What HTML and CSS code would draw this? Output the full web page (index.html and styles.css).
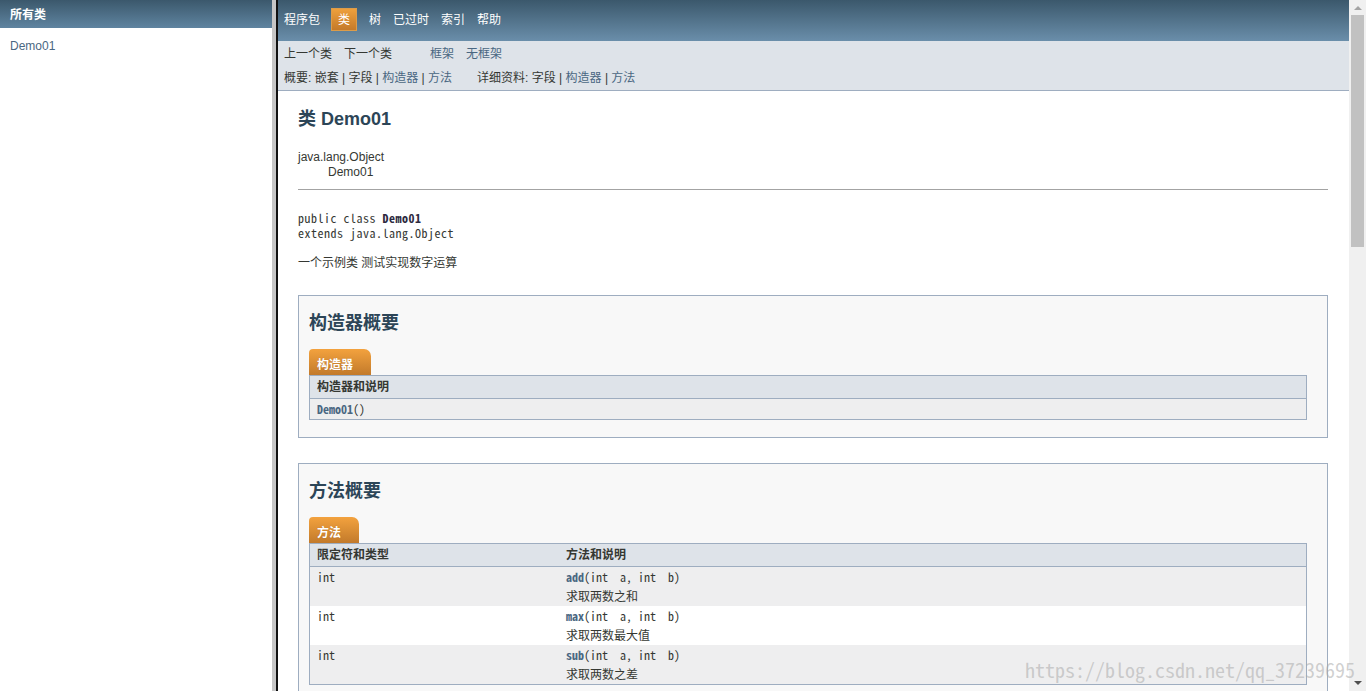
FILE: index.html
```html
<!DOCTYPE html>
<html lang="zh-CN">
<head>
<meta charset="utf-8">
<title>Demo01</title>
<link rel="stylesheet" href="styles.css">
</head>
<body>
<div class="page">
  <aside class="left-frame">
    <h1 class="bar">所有类</h1>
    <ul class="class-list">
      <li><a href="#">Demo01</a></li>
    </ul>
  </aside>
  <div class="divider"></div>
  <div class="right-frame">
    <div class="doc">
      <nav class="top-nav">
        <ul>
          <li>程序包</li>
          <li class="current">类</li>
          <li>树</li>
          <li>已过时</li>
          <li>索引</li>
          <li>帮助</li>
        </ul>
      </nav>
      <div class="sub-nav">
        <div class="row">
          <ul class="nav-list">
            <li>上一个类</li>
            <li>下一个类</li>
          </ul>
          <ul class="nav-list frames">
            <li><a href="#">框架</a></li>
            <li><a href="#">无框架</a></li>
          </ul>
        </div>
        <div class="row row2">
          <span>概要:&nbsp;嵌套&nbsp;|&nbsp;字段&nbsp;|&nbsp;<a href="#">构造器</a>&nbsp;|&nbsp;<a href="#">方法</a></span>
          <span>详细资料:&nbsp;字段&nbsp;|&nbsp;<a href="#">构造器</a>&nbsp;|&nbsp;<a href="#">方法</a></span>
        </div>
      </div>
      <div class="content">
        <h2 class="title">类 Demo01</h2>
        <div class="inheritance">
          <div>java.lang.Object</div>
          <div class="child">Demo01</div>
        </div>
        <hr class="rule">
        <pre class="signature">public class <b class="type-name">Demo01</b>
extends java.lang.Object</pre>
        <div class="desc">一个示例类 测试实现数字运算</div>

        <section class="summary">
          <h3>构造器概要</h3>
          <div class="tab"><span>构造器</span></div>
          <table class="member-table">
            <thead>
              <tr><th>构造器和说明</th></tr>
            </thead>
            <tbody>
              <tr class="alt"><td><code><a class="member" href="#">Demo01</a>()</code></td></tr>
            </tbody>
          </table>
        </section>

        <section class="summary">
          <h3>方法概要</h3>
          <div class="tab"><span>方法</span></div>
          <table class="member-table">
            <thead>
              <tr><th class="col-first">限定符和类型</th><th>方法和说明</th></tr>
            </thead>
            <tbody>
              <tr class="alt">
                <td class="col-first"><code>int</code></td>
                <td><code><a class="member" href="#">add</a>(int&nbsp;&nbsp;a, int&nbsp;&nbsp;b)</code><div class="block">求取两数之和</div></td>
              </tr>
              <tr>
                <td class="col-first"><code>int</code></td>
                <td><code><a class="member" href="#">max</a>(int&nbsp;&nbsp;a, int&nbsp;&nbsp;b)</code><div class="block">求取两数最大值</div></td>
              </tr>
              <tr class="alt">
                <td class="col-first"><code>int</code></td>
                <td><code><a class="member" href="#">sub</a>(int&nbsp;&nbsp;a, int&nbsp;&nbsp;b)</code><div class="block">求取两数之差</div></td>
              </tr>
            </tbody>
          </table>
        </section>
      </div>
    </div>
    <div class="scrollbar">
      <div class="sb-btn"><span class="arrow-up"></span></div>
      <div class="sb-thumb"></div>
      <div class="sb-track"></div>
      <div class="sb-btn sb-btn-down"><span class="arrow-down"></span></div>
    </div>
  </div>
  <div class="watermark">https://blog.csdn.net/qq_37239695</div>
</div>
</body>
</html>
```
FILE: styles.css
```css
html, body {
  margin: 0;
  height: 100%;
}
body {
  font-family: "Liberation Sans", "Noto Sans CJK SC", sans-serif;
  font-size: 12px;
  color: #353833;
  background: #fff;
  overflow: hidden;
}
a {
  color: #4a6782;
  text-decoration: none;
}
ul {
  list-style: none;
  margin: 0;
  padding: 0;
}
code, pre {
  font-family: "Noto Sans Mono CJK SC", "Liberation Mono", monospace;
}

.page {
  display: flex;
  height: 691px;
  position: relative;
}

/* left frame */
.left-frame {
  width: 272px;
  flex: none;
  background: #fff;
}
.bar {
  margin: 0;
  height: 28px;
  box-sizing: border-box;
  padding: 3px 0 0 10px;
  line-height: 25px;
  background: linear-gradient(#3b586c, #5f84a0);
  color: #fff;
  font-size: 12px;
  font-weight: bold;
}
.class-list {
  padding: 10px 0 0 10px;
  line-height: 16px;
}

.divider {
  width: 4px;
  flex: none;
  background: #c6c6c6;
  border-right: 2px solid #111;
}

/* right frame */
.right-frame {
  flex: 1;
  display: flex;
  min-width: 0;
}
.doc {
  flex: 1;
  min-width: 0;
  overflow: hidden;
}

.top-nav {
  height: 41px;
  box-sizing: border-box;
  padding: 8px 0 0 6px;
  background: linear-gradient(#3b586c, #6a8eaa);
}
.top-nav ul {
  display: flex;
  gap: 12px;
}
.top-nav li {
  color: #fff;
  height: 21px;
  padding-top: 1px;
  box-sizing: content-box;
  line-height: 21px;
  border-top: 1px solid transparent;
  border-bottom: 1px solid transparent;
}
.top-nav li.current {
  margin-left: -1px;
  padding: 1px 6px 0;
  height: 20px;
  border: 1px solid #dc9c4a;
  background: linear-gradient(#eea03c, #c47a2a);
}

.sub-nav {
  height: 49px;
  background: #dee3e9;
  border-bottom: 1px solid #9eadc0;
}
.sub-nav .row {
  display: flex;
  line-height: 16px;
  padding-top: 5px;
}
.nav-list {
  display: flex;
  margin-right: 25px;
}
.nav-list li {
  padding: 0 6px;
}
.nav-list.frames {
  margin-left: 1px;
}
.sub-nav .row2 {
  padding: 8px 0 0 6px;
  gap: 25px;
}

/* content */
.content {
  padding: 0 21px 0 20px;
}
.title {
  margin: 17px 0 0;
  font-size: 18px;
  line-height: 22px;
  font-weight: bold;
  color: #2c4557;
}
.inheritance {
  margin-top: 20px;
  line-height: 15px;
}
.inheritance .child {
  padding-left: 30px;
}
.rule {
  margin: 9px 0 0;
  border: 0;
  border-top: 1px solid #a3a3a3;
  height: 0;
}
.signature {
  margin: 20px 0 0;
  font-size: 12px;
  line-height: 15px;
  letter-spacing: 0.5px;
}
.type-name {
  color: #2d2a40;
}
.desc {
  margin-top: 15px;
  line-height: 16px;
}

.summary {
  margin-top: 24px;
  border: 1px solid #9eadc0;
  background: #f8f8f8;
  padding: 16px 20px 5px 10px;
}
.summary + .summary {
  margin-top: 25px;
}
.summary h3 {
  margin: 0;
  font-size: 18px;
  line-height: 22px;
  font-weight: bold;
  color: #2c4557;
}
.tab {
  margin-top: 15px;
  display: flex;
}
.tab span {
  padding: 8px 18px 2px 8px;
  line-height: 16px;
  color: #fff;
  font-weight: bold;
  border-radius: 4px 7px 0 0;
  background: linear-gradient(#f3a23e, #c27a2b);
  text-shadow: 0 0 1px rgba(120, 60, 0, 0.4);
}

.member-table {
  width: 100%;
  border-collapse: separate;
  border-spacing: 0;
  border: 1px solid #9eadc0;
  margin-bottom: 12px;
}
.member-table th {
  text-align: left;
  font-weight: bold;
  background: #dee3e9;
  padding: 3px 3px 3px 7px;
  height: 16px;
  line-height: 16px;
  border-bottom: 1px solid #9eadc0;
}
.member-table td {
  padding: 3px 3px 3px 7px;
  line-height: 14px;
  vertical-align: top;
  background: #fff;
}
.member-table tr.alt td {
  background: #eeeeef;
}
.col-first {
  width: 25%;
}
.member-table code {
  display: block;
  font-size: 12px;
  line-height: 14px;
  height: 14px;
}
.member {
  font-weight: bold;
}
.block {
  margin-top: 5px;
  margin-bottom: -2px;
  line-height: 16px;
  height: 16px;
}

/* fake scrollbar of the right frame */
.scrollbar {
  width: 17px;
  flex: none;
  background: #f0f0f0;
  display: flex;
  flex-direction: column;
}
.sb-btn {
  height: 15px;
  display: flex;
  justify-content: center;
  align-items: center;
}
.sb-btn-down {
  height: 17px;
}
.arrow-up {
  width: 0;
  height: 0;
  border-left: 4px solid transparent;
  border-right: 4px solid transparent;
  border-bottom: 4px solid #a3a3a3;
}
.arrow-down {
  width: 0;
  height: 0;
  border-left: 4px solid transparent;
  border-right: 4px solid transparent;
  border-top: 4px solid #505050;
}
.sb-thumb {
  height: 232px;
  margin: 0 2px;
  background: #c1c1c1;
}
.sb-track {
  flex: 1;
}

.watermark {
  position: absolute;
  left: 1025px;
  top: 657px;
  font-family: "Noto Sans Mono CJK SC", "Liberation Mono", monospace;
  font-size: 20px;
  line-height: 26px;
  color: rgba(170, 170, 170, 0.55);
  pointer-events: none;
  white-space: nowrap;
}
```
